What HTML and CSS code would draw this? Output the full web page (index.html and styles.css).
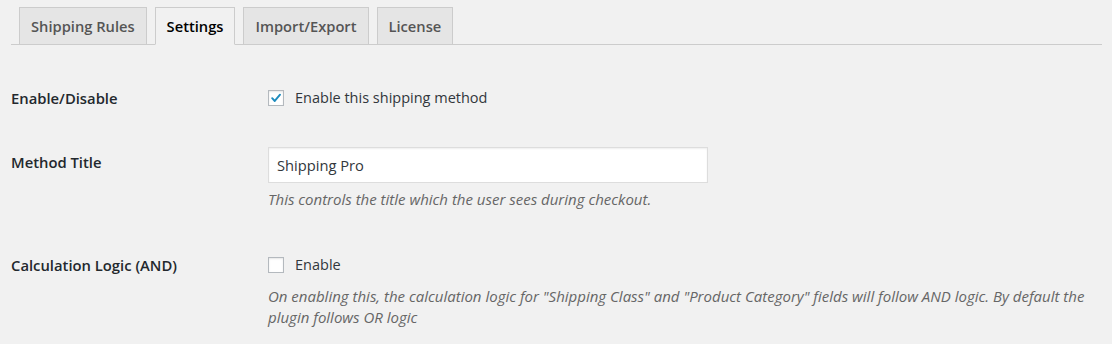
FILE: index.html
```html
<!DOCTYPE html>
<html lang="en">
<head>
<meta charset="utf-8">
<title>Shipping Pro Settings</title>
<link rel="stylesheet" href="styles.css">
</head>
<body>
<div class="page">
  <nav class="tabs">
    <a class="tab">Shipping Rules</a>
    <a class="tab tab-active">Settings</a>
    <a class="tab">Import/Export</a>
    <a class="tab">License</a>
  </nav>

  <div class="form">
    <div class="row row-enable">
      <div class="label">Enable/Disable</div>
      <div class="field">
        <label class="check"><span class="box box-checked"><svg viewBox="0 0 16 16" width="16" height="16"><path d="M3.6 8.2 L6.6 11.4 L12.6 4.2" fill="none" stroke="#1e8cbe" stroke-width="2.2" stroke-linecap="round" stroke-linejoin="round"/></svg></span>Enable this shipping method</label>
      </div>
    </div>

    <div class="row row-title">
      <div class="label label-input">Method Title</div>
      <div class="field">
        <div class="input">Shipping Pro</div>
        <p class="desc">This controls the title which the user sees during checkout.</p>
      </div>
    </div>

    <div class="row row-logic">
      <div class="label">Calculation Logic (AND)</div>
      <div class="field">
        <label class="check"><span class="box"></span>Enable</label>
        <p class="desc desc-gap">On enabling this, the calculation logic for "Shipping Class" and "Product Category" fields will follow AND logic. By default the plugin follows OR logic</p>
      </div>
    </div>
  </div>
</div>
</body>
</html>
```

FILE: styles.css
```css
html, body {
  margin: 0;
  padding: 0;
  background: #f1f1f1;
}
body {
  font-family: "Open Sans", "Noto Sans", sans-serif;
  font-size: 14px;
  color: #23282d;
}
.page {
  padding: 7px 10px 0 11px;
}
.tabs {
  display: flex;
  gap: 8px;
  padding-left: 8px;
  border-bottom: 1px solid #ccc;
  height: 37px;
}
.tab {
  display: block;
  box-sizing: border-box;
  height: 38px;
  padding: 0 11px;
  line-height: 36px;
  border: 1px solid #ccc;
  background: #e5e5e5;
  color: #555;
  font-weight: 600;
  font-size: 14.7px;
  white-space: nowrap;
}
.tab-active {
  background: #f1f1f1;
  border-bottom-color: #f1f1f1;
  color: #000;
}
.form {
  display: flex;
  flex-direction: column;
}
.row {
  display: grid;
  grid-template-columns: 257px 1fr;
}
.row-enable { margin-top: 43px; }
.row-title { margin-top: 39px; }
.row-logic { margin-top: 45px; }
.label {
  font-weight: 600;
  font-size: 14.8px;
  line-height: 20px;
}
.label-input { padding-top: 5px; }
.check {
  display: flex;
  align-items: center;
  height: 18px;
  font-size: 14.5px;
  color: #32373c;
}
.box {
  box-sizing: border-box;
  width: 16px;
  height: 16px;
  margin: 1px 11px 0 0;
  border: 1px solid #b4b9be;
  background: #fff;
  box-shadow: inset 0 1px 2px rgba(0,0,0,0.1);
  display: flex;
  align-items: center;
  justify-content: center;
}
.box svg { display: block; }
.input {
  box-sizing: border-box;
  width: 440px;
  height: 36px;
  padding: 0 8px;
  line-height: 34px;
  border: 1px solid #ddd;
  background: #fff;
  box-shadow: inset 0 1px 2px rgba(0,0,0,0.07);
  font-size: 14.7px;
  color: #32373c;
}
.desc {
  margin: 6px 0 0;
  font-style: italic;
  font-size: 15px;
  line-height: 21px;
  color: #666;
}
.desc-gap { margin-top: 13px; }
```
